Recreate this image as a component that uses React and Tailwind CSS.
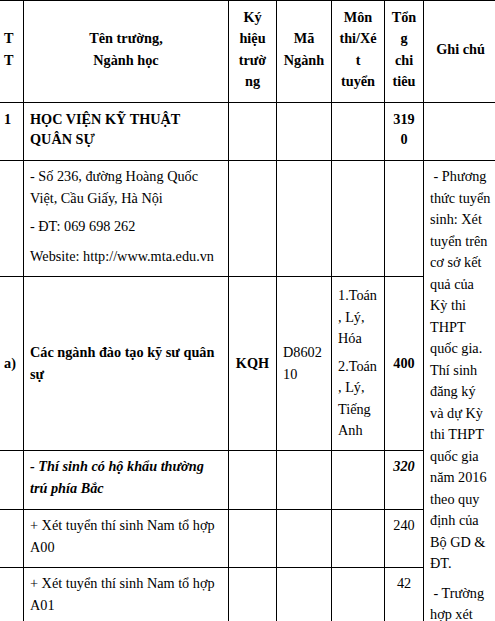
const cell = 'border border-black px-[6px] align-middle';

const ghiChu = [
  ' - Phương thức tuyển sinh: Xét tuyển trên cơ sở kết quả của Kỳ thi THPT quốc gia. Thí sinh đăng ký và dự Kỳ thi THPT quốc gia năm 2016 theo quy định của Bộ GD & ĐT.',
  ' - Trường hợp xét tuyển',
];

const extraRows = [
  ['+ Xét tuyển thí sinh Nữ tổ hợp', 'A00', '19'],
  ['+ Xét tuyển thí sinh Nữ tổ hợp', 'A01', '3'],
];

export default function App() {
  return (
    <div
      className="w-[495px] h-[621px] overflow-hidden bg-white text-black text-[14.25px] leading-[21.5px]"
      style={{ fontFamily: '"Liberation Serif", "Times New Roman", serif' }}
    >
      <table className="ml-[-3px] w-[500px] table-fixed border-collapse">
        <colgroup>
          <col className="w-[26px]" />
          <col className="w-[205px]" />
          <col className="w-[48px]" />
          <col className="w-[55px]" />
          <col className="w-[53px]" />
          <col className="w-[39px]" />
          <col className="w-[74px]" />
        </colgroup>
        <tbody>
          {/* header */}
          <tr className="h-[102px] font-bold">
            <td className={`${cell} text-left pb-[4px]`}>T<br />T</td>
            <td className={`${cell} text-center pb-[4px]`}>Tên trường,<br />Ngành học</td>
            <td className={`${cell} text-center pb-[4px]`}>Ký<br />hiệu<br />trườ<br />ng</td>
            <td className={`${cell} text-center pb-[4px]`}>Mã<br />Ngành</td>
            <td className={`${cell} text-center pb-[4px]`}>Môn<br />thi/Xé<br />t<br />tuyển</td>
            <td className={`${cell} text-center pb-[4px]`}>Tổn<br />g<br />chi<br />tiêu</td>
            <td className={`${cell} text-center pb-[4px]`}>Ghi chú</td>
          </tr>

          {/* row 1 */}
          <tr className="h-[58px] font-bold leading-[20px]">
            <td className={`${cell} !align-top pt-[6px]`}>1</td>
            <td className={`${cell} !align-top pt-[6px]`}>HỌC VIỆN KỸ THUẬT<br />QUÂN SỰ</td>
            <td className={cell}></td>
            <td className={cell}></td>
            <td className={cell}></td>
            <td className={`${cell} !align-top pt-[6px] text-center`}>319<br />0</td>
            <td className={cell}></td>
          </tr>

          {/* address */}
          <tr className="h-[116px]">
            <td className={cell}></td>
            <td className={`${cell} !align-top pt-[5px]`}>
              <p>- Số 236, đường Hoàng Quốc<br />Việt, Cầu Giấy, Hà Nội</p>
              <p className="mt-[7px]">- ĐT: 069 698 262</p>
              <p className="mt-[8px]">Website: http://www.mta.edu.vn</p>
            </td>
            <td className={cell}></td>
            <td className={cell}></td>
            <td className={cell}></td>
            <td className={cell}></td>
            <td rowSpan={5 + extraRows.length} className={`${cell} !align-top pt-[5px] whitespace-pre-wrap`}>
              <p>{ghiChu[0]}</p>
              <p className="mt-[8px]">{ghiChu[1]}</p>
            </td>
          </tr>

          {/* a) */}
          <tr className="h-[174px]">
            <td className={`${cell} font-bold`}>a)</td>
            <td className={`${cell} font-bold`}>Các ngành đào tạo kỹ sư quân<br />sự</td>
            <td className={`${cell} font-bold text-center`}>KQH</td>
            <td className={cell}>D8602<br />10</td>
            <td className={cell}>
              <p>1.Toán<br />, Lý,<br />Hóa</p>
              <p className="mt-[6px]">2.Toán<br />, Lý,<br />Tiếng<br />Anh</p>
            </td>
            <td className={`${cell} font-bold text-center`}>400</td>
          </tr>

          {/* north */}
          <tr className="h-[59px]">
            <td className={cell}></td>
            <td className={`${cell} !align-top pt-[5px] font-bold italic`}>- Thí sinh có hộ khẩu thường<br />trú phía Bắc</td>
            <td className={cell}></td>
            <td className={cell}></td>
            <td className={cell}></td>
            <td className={`${cell} !align-top pt-[5px] font-bold italic text-center`}>320</td>
          </tr>

          <tr className="h-[58px]">
            <td className={cell}></td>
            <td className={`${cell} !align-top pt-[5px]`}>+ Xét tuyển thí sinh Nam tổ hợp<br />A00</td>
            <td className={cell}></td>
            <td className={cell}></td>
            <td className={cell}></td>
            <td className={`${cell} !align-top pt-[5px] text-center`}>240</td>
          </tr>

          <tr className="h-[58px]">
            <td className={cell}></td>
            <td className={`${cell} !align-top pt-[5px]`}>+ Xét tuyển thí sinh Nam tổ hợp<br />A01</td>
            <td className={cell}></td>
            <td className={cell}></td>
            <td className={cell}></td>
            <td className={`${cell} !align-top pt-[5px] text-center`}>42</td>
          </tr>

          {extraRows.map(([a, b, n]) => (
            <tr key={b} className="h-[58px]">
              <td className={cell}></td>
              <td className={`${cell} !align-top pt-[5px]`}>{a}<br />{b}</td>
              <td className={cell}></td>
              <td className={cell}></td>
              <td className={cell}></td>
              <td className={`${cell} !align-top pt-[5px] text-center`}>{n}</td>
            </tr>
          ))}
        </tbody>
      </table>
    </div>
  );
}
